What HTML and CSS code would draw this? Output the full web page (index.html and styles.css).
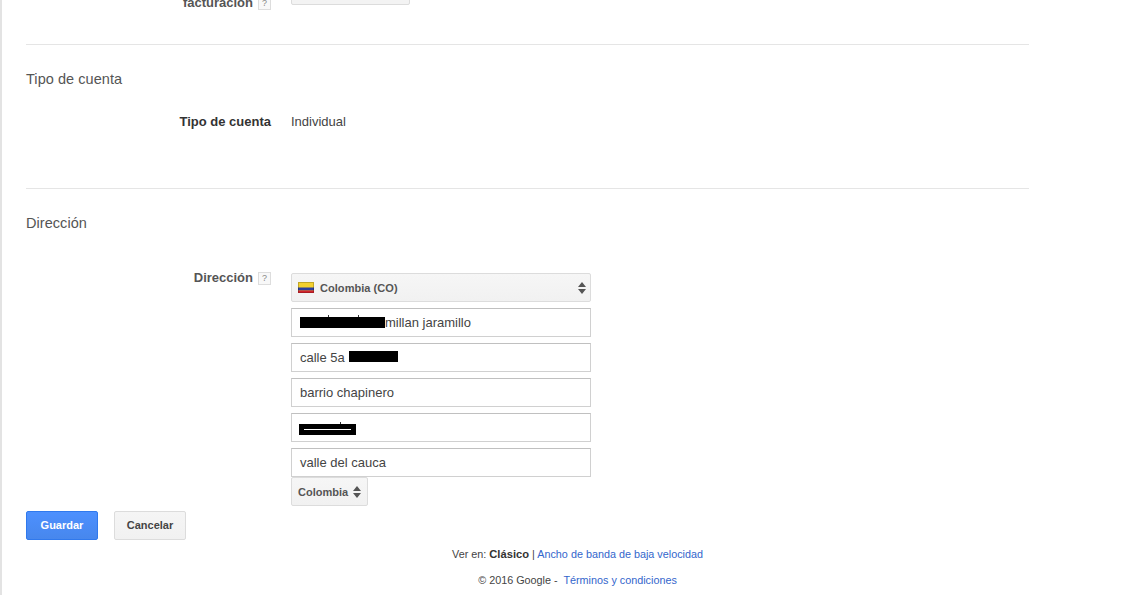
FILE: index.html
```html
<!DOCTYPE html>
<html lang="es">
<head>
<meta charset="utf-8">
<title>Configuración de facturación</title>
<link rel="stylesheet" href="styles.css">
</head>
<body>
<div class="page">
  <main class="main">
    <section class="section first">
      <div class="row clipped">
        <div class="label"><span>facturación</span><span class="help">?</span></div>
        <div class="value"><div class="stub"></div></div>
      </div>
    </section>
    <section class="section account">
      <h2 class="heading">Tipo de cuenta</h2>
      <div class="row">
        <div class="label"><span class="dark">Tipo de cuenta</span></div>
        <div class="value plain">Individual</div>
      </div>
    </section>
    <section class="section address">
      <h2 class="heading">Dirección</h2>
      <div class="row">
        <div class="label"><span>Dirección</span><span class="help">?</span></div>
        <div class="value form">
          <div class="country">
            <svg class="flag" width="16" height="11" viewBox="0 0 16 11"><rect width="16" height="11" fill="#f3d02f"/><rect y="5.5" width="16" height="3" fill="#2b3f9e"/><rect y="8.5" width="16" height="2.5" fill="#d3242c"/><rect x=".5" y=".5" width="15" height="10" fill="none" stroke="#000" stroke-opacity=".2"/></svg>
            <span class="country-name">Colombia (CO)</span>
            <svg class="updown" width="8" height="12" viewBox="0 0 8 12"><path d="M4 0 8 5H0ZM0 7H8L4 12Z" fill="#555"/></svg>
          </div>
          <div class="field"><span class="redact r1"></span>millan jaramillo</div>
          <div class="field">calle 5a <span class="redact r2"></span></div>
          <div class="field">barrio chapinero</div>
          <div class="field"><span class="redact r3"><span class="strike"></span></span></div>
          <div class="field">valle del cauca</div>
          <div class="small-select">Colombia
            <svg class="updown-s" width="8" height="12" viewBox="0 0 8 12"><path d="M4 0 8 5H0ZM0 7H8L4 12Z" fill="#555"/></svg>
          </div>
        </div>
      </div>
    </section>
    <div class="actions">
      <button class="btn primary" type="button">Guardar</button>
      <button class="btn" type="button">Cancelar</button>
    </div>
  </main>
  <footer class="footer">
    <p class="foot-line one">Ver en: <b class="view">Clásico</b> | <a href="#">Ancho de banda de baja velocidad</a></p>
    <p class="foot-line two">© 2016 Google -&nbsp; <a href="#">Términos y condiciones</a></p>
  </footer>
</div>
</body>
</html>
```
FILE: styles.css
```css
* { box-sizing: border-box; }
html, body { margin: 0; height: 100%; overflow: hidden; background: #fff; }
body { font-family: "Liberation Sans", Arial, sans-serif; font-size: 13px; color: #333; }
.page { height: 595px; width: 1155px; border-left: 2px solid #e3e3e3; overflow: hidden; }
.main { width: 1027px; padding-left: 24px; }
.section { border-bottom: 1px solid #e5e5e5; }
.first { height: 45px; overflow: hidden; }
.account { height: 144px; }
.address { border-bottom: 0; }
.heading { margin: 0; padding-top: 25px; height: 68px; font-size: 14.5px; line-height: 18px; font-weight: 400; color: #555; letter-spacing: .05px; }
.row { display: flex; }
.clipped { margin-top: -6px; }
.address .row { padding-top: 12px; }
.label { width: 245px; display: flex; justify-content: flex-end; align-items: flex-start; gap: 5px; font-weight: 700; line-height: 18px; color: #555; }
.label .dark { color: #333; }
.help { width: 13px; height: 13px; margin-top: 3px; border: 1px solid #ddd; background: #f8f8f8; color: #888; font-size: 9px; font-weight: 400; line-height: 11px; text-align: center; }
.value { margin-left: 20px; }
.plain { line-height: 18px; font-size: 13px; color: #444; }
.stub { width: 119px; height: 16px; margin-top: -5px; border: 1px solid #dcdcdc; border-radius: 2px; background: #f3f3f3; }
.form { width: 300px; margin-top: 4px; }
.country { height: 29px; display: flex; align-items: center; padding: 0 4px 0 6px; border: 1px solid #dcdcdc; border-radius: 2px; background: linear-gradient(#f6f6f6, #f1f1f1); margin-bottom: 6px; }
.flag { flex: none; }
.country-name { flex: 1; margin-left: 6px; font-size: 11px; font-weight: 700; color: #555; letter-spacing: .05px; }
.field { height: 29px; margin-bottom: 6px; padding: 0 8px; border: 1px solid #d0d0d0; border-top-color: #c0c0c0; line-height: 28px; font-size: 13px; color: #444; background: #fff; }
.field:nth-last-child(2) { margin-bottom: 0; }
.redact { position: relative; display: inline-block; background: #000; vertical-align: top; }
.r1 { width: 85px; height: 11px; margin-top: 8px; }
.r1::before { content: ""; position: absolute; left: 28px; top: -2px; width: 1px; height: 2px; background: #333; box-shadow: 30px 0 #333; }
.r2 { width: 49px; height: 11px; margin-top: 7px; margin-left: 1px; }
.r3 { width: 57px; height: 11px; margin-top: 10px; margin-left: -1px; }
.r3::before { content: ""; position: absolute; left: 41px; top: -2px; width: 1px; height: 2px; background: #333; }
.strike { position: absolute; left: 5px; top: 5px; width: 47px; height: 1px; background: #fff; }
.small-select { display: inline-flex; align-items: center; gap: 5px; width: 77px; height: 29px; padding-left: 6px; border: 1px solid #dcdcdc; border-radius: 2px; background: linear-gradient(#f6f6f6, #f1f1f1); font-size: 11px; font-weight: 700; color: #555; }
.actions { display: flex; gap: 16px; padding-top: 5px; }
.btn { width: 72px; height: 29px; padding: 0 0 2px; border: 1px solid #dcdcdc; border-radius: 2px; background: linear-gradient(#f5f5f5, #f1f1f1); font: 700 11px "Liberation Sans", Arial, sans-serif; color: #444; }
.primary { border-color: #3079ed; background: linear-gradient(#4d90fe, #4787ed); color: #fff; }
.footer { width: 1151px; text-align: center; font-size: 10.8px; color: #444; }
.foot-line { margin: 0; line-height: 14px; width: 1151px; }
.one { padding-top: 7px; }
.two { padding-top: 12px; }
.view { font-size: 11.2px; color: #333; }
.footer a { color: #36c; text-decoration: none; }
```
